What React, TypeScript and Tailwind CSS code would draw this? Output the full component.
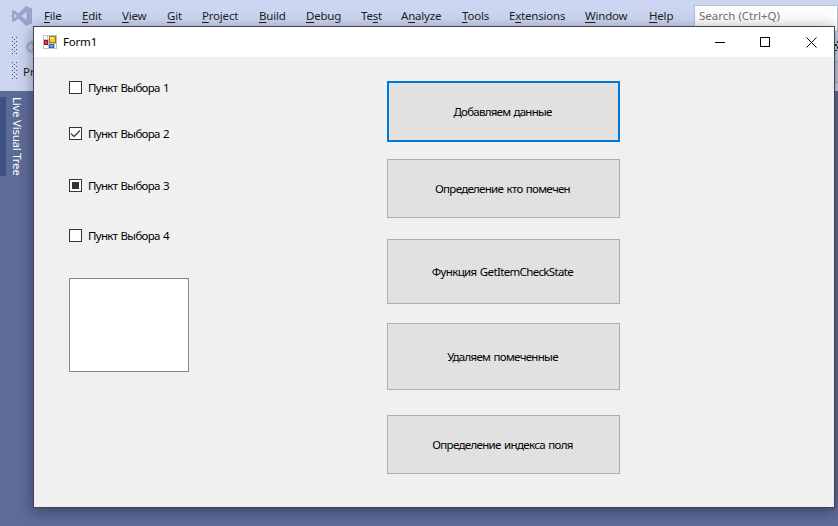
import React from "react";

type MenuEntry = { pre: string; key: string; post: string; width: string };

const menu: MenuEntry[] = [
  { pre: "", key: "F", post: "ile", width: "w-[18px]" },
  { pre: "", key: "E", post: "dit", width: "w-[20px]" },
  { pre: "", key: "V", post: "iew", width: "w-[25px]" },
  { pre: "", key: "G", post: "it", width: "w-[15px]" },
  { pre: "", key: "P", post: "roject", width: "w-[37px]" },
  { pre: "", key: "B", post: "uild", width: "w-[27px]" },
  { pre: "", key: "D", post: "ebug", width: "w-[35px]" },
  { pre: "Te", key: "s", post: "t", width: "w-[20px]" },
  { pre: "A", key: "n", post: "alyze", width: "w-[41px]" },
  { pre: "", key: "T", post: "ools", width: "w-[27px]" },
  { pre: "E", key: "x", post: "tensions", width: "w-[56px]" },
  { pre: "", key: "W", post: "indow", width: "w-[44px]" },
  { pre: "", key: "H", post: "elp", width: "w-[25px]" },
];

function VisualStudioLogo() {
  return (
    <svg className="ml-3 h-5 w-5 shrink-0" viewBox="0 0 20 20">
      <path
        fill="#99a3cc"
        fillRule="evenodd"
        d="M0 5 L2 4 L6.5 7.6 L14 0 L20 2.5 V17.5 L14 20 L6.5 12.4 L2 16 L0 15 Z M2.3 7.2 V12.8 L4.9 10 Z M9.4 10 L14.5 14 V6 Z"
      />
    </svg>
  );
}

function Grip() {
  return (
    <svg className="-mt-[2px] h-[18px] w-[5px]" viewBox="0 0 5 18" shapeRendering="crispEdges">
      {[0, 4, 8, 12, 16].map((y) => (
        <g key={y} fill="#4d5570">
          <rect x="0" y={y} width="1" height="1" />
          <rect x="4" y={y} width="1" height="1" />
          {y < 16 && <rect x="2" y={y + 2} width="1" height="1" />}
        </g>
      ))}
    </svg>
  );
}

function FormIcon() {
  return (
    <svg className="h-[14px] w-[14px]" viewBox="0 0 14 14" shapeRendering="crispEdges">
      <rect width="14" height="14" fill="#c0c2c5" />
      <path fill="#fff" d="M1 1h3v3H1zM5 1h1v3H5zM1 10h4v3H1zM12 9h1v4h-1z" />
      <rect x="6" y="1" width="7" height="7" fill="#a87808" />
      <rect x="7" y="2" width="5" height="5" fill="#f8c93c" />
      <rect x="7" y="2" width="3" height="2" fill="#fde58a" />
      <rect x="1" y="5" width="4" height="5" fill="#8c1616" />
      <rect x="2" y="6" width="2" height="3" fill="#d94a3a" />
      <rect x="6" y="9" width="5" height="4" fill="#2e65bd" />
      <rect x="7" y="10" width="3" height="2" fill="#6ea4ee" />
    </svg>
  );
}

type CheckState = "off" | "on" | "mixed";

function CheckItem({ label, state, space }: { label: string; state: CheckState; space: string }) {
  return (
    <label className={`flex h-[13px] items-center ${space}`}>
      <span className="flex h-[13px] w-[13px] shrink-0 items-center justify-center border border-[#333] bg-white">
        {state === "on" && (
          <svg className="h-[11px] w-[11px]" viewBox="0 0 11 11">
            <path d="M1 5.5 L4 8.5 L10 2.5" fill="none" stroke="#444" strokeWidth="1.3" />
          </svg>
        )}
        {state === "mixed" && <span className="h-[7px] w-[7px] bg-[#333]" />}
      </span>
      <span className="ml-[6px] whitespace-nowrap text-[11.5px] leading-[13px] tracking-[-0.7px] [word-spacing:1px]">{label}</span>
    </label>
  );
}

const buttons = [
  { label: "Добавляем данные", box: "h-[61px] border-2 border-[#0078d7] tracking-[-0.75px]" },
  { label: "Определение кто помечен", box: "mt-[17px] h-[59px] border border-[#adadad] tracking-[-0.7px]" },
  { label: "Функция GetItemCheckState", box: "mt-[21px] h-[65px] border border-[#adadad] tracking-[-0.65px]" },
  { label: "Удаляем помеченные", box: "mt-[19px] h-[67px] border border-[#adadad] tracking-[-0.69px]" },
  { label: "Определение индекса поля", box: "mt-[25px] h-[59px] border border-[#adadad] tracking-[-0.66px]" },
];

export default function App() {
  return (
    <div className="relative h-[526px] w-[838px] overflow-hidden bg-[#5d6b99] font-['Noto_Sans','Open_Sans',sans-serif] text-[#1e1e1e]">
      <header className="h-[91px] bg-[#ccd5f0]">
        <div className="flex h-8 items-center">
          <VisualStudioLogo />
          <nav className="ml-3 flex gap-5 text-[11.5px] leading-4 tracking-[-0.2px]">
            {menu.map((m) => (
              <span key={m.key + m.post} className={`whitespace-nowrap ${m.width}`}>
                {m.pre}
                <span className="underline underline-offset-2">{m.key}</span>
                {m.post}
              </span>
            ))}
          </nav>
          <div className="ml-5 mt-[5px] h-[27px] flex-1 border border-[#b8bfd8] bg-[#fcfcfc] pl-1 pt-[2px] text-[11.5px] leading-4 text-[#717171]">
            Search (Ctrl+Q)
          </div>
        </div>
        <div className="flex h-7 items-center pl-3 pt-[1px]">
          <Grip />
          <svg className="ml-[9px] h-3 w-3" viewBox="0 0 12 12">
            <circle cx="6" cy="6" r="6" fill="#a9aec0" />
            <path d="M10 6H3M6 3L3 6l3 3" fill="none" stroke="#ccd5f0" strokeWidth="1.5" />
          </svg>
          <svg className="ml-auto h-[13px] w-[3px]" viewBox="0 0 3 13" shapeRendering="crispEdges">
            <path d="M2 1h1v2H2zM0 4h2v2H0zM2 6h1v3H2zM0 10h2v1H0z" fill="#30343f" />
          </svg>
        </div>
        <div className="flex h-6 items-center pl-3">
          <Grip />
          <span className="ml-[6px] text-[11.5px]">Pr</span>
          <span className="ml-auto h-[22px] w-[3px] border-y border-[#a4acc4] bg-[#c3cad8]" />
        </div>
      </header>
      <aside className="flex pt-[6px]">
        <div className="h-[79px] w-[6px] bg-[#40527f]" />
        <span className="ml-[3px] text-[11.5px] leading-4 tracking-[-0.25px] text-white [writing-mode:vertical-rl]">Live Visual Tree</span>
      </aside>

      <main className="absolute left-[33px] top-[26px] flex h-[482px] w-[802px] flex-col border border-[#3f4354] bg-[#f0f0f0] text-black shadow-[0_3px_14px_rgba(0,0,0,0.4)]">
        <div className="flex h-[30px] shrink-0 items-center bg-white pl-[9px]">
          <FormIcon />
          <span className="ml-[6px] text-[11.5px] tracking-[-0.2px]">Form1</span>
          <svg className="ml-auto mr-[17px] h-[11px] w-[103px]" viewBox="0 0 103 11" fill="none" stroke="#000">
            <path d="M1 5.5h10M46.5 .5h9v9h-9z" shapeRendering="crispEdges" />
            <path d="M92.5 .5l10 10M102.5 .5l-10 10" />
          </svg>
        </div>
        <div className="flex items-start">
          <section className="ml-[35px] mt-6 w-[120px]">
            <CheckItem label="Пункт Выбора 1" state="off" space="" />
            <CheckItem label="Пункт Выбора 2" state="on" space="mt-[33px]" />
            <CheckItem label="Пункт Выбора 3" state="mixed" space="mt-[39px]" />
            <CheckItem label="Пункт Выбора 4" state="off" space="mt-[37px]" />
            <div className="mt-[36px] h-[94px] border border-[#828790] bg-white" />
          </section>
          <section className="ml-[198px] mt-6 flex w-[233px] flex-col">
            {buttons.map((b) => (
              <button key={b.label} className={`bg-[#e1e1e1] pr-[2px] text-[11.5px] leading-4 [word-spacing:1px] ${b.box}`}>
                {b.label}
              </button>
            ))}
          </section>
        </div>
      </main>
    </div>
  );
}
